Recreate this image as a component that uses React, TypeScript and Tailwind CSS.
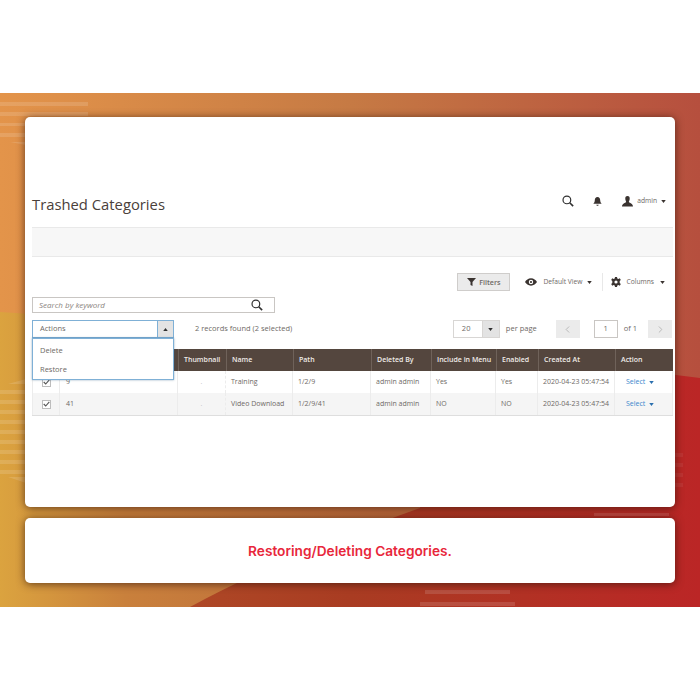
import { ChevronLeft, ChevronRight } from "lucide-react"

const columns = [
  { label: "", width: "w-[28px]" },
  { label: "ID", width: "w-[118px]" },
  { label: "Thumbnail", width: "w-[48px]" },
  { label: "Name", width: "w-[67px]" },
  { label: "Path", width: "w-[78px]" },
  { label: "Deleted By", width: "w-[60px]" },
  { label: "Include in Menu", width: "w-[65px]" },
  { label: "Enabled", width: "w-[42px]" },
  { label: "Created At", width: "w-[77px]" },
  { label: "Action", width: "w-[58px]" },
]

const rows = [
  { id: "9", name: "Training", path: "1/2/9", menu: "Yes", enabled: "Yes", bg: "bg-white" },
  { id: "41", name: "Video Download", path: "1/2/9/41", menu: "NO", enabled: "NO", bg: "bg-[#f5f5f5]" },
]

const lowerStripes = [297, 307, 317, 327, 337, 347, 357, 367, 377]

function Caret({ up = false, className = "" }: { up?: boolean; className?: string }) {
  return (
    <svg width="5" height="3" viewBox="0 0 6 4" className={className}>
      <path d={up ? "M0 4 L3 0 L6 4 Z" : "M0 0 L3 4 L6 0 Z"} fill="currentColor" />
    </svg>
  )
}

function SearchIcon({ size }: { size: number }) {
  return (
    <svg width={size} height={size} viewBox="0 0 14 14" fill="none" stroke="#303030">
      <circle cx="5.7" cy="5.7" r="4.5" strokeWidth="1.4" />
      <path d="M9 9 L13 13" strokeWidth="1.9" />
    </svg>
  )
}

function CheckBox() {
  return (
    <span className="flex h-[9px] w-[9px] items-center justify-center border border-[#bdbdbd] bg-white">
      <svg width="7" height="6" viewBox="0 0 7 6" fill="none">
        <path d="M0.7 3 L2.7 5 L6.3 0.8" stroke="#555" strokeWidth="1.1" />
      </svg>
    </span>
  )
}

function Backdrop() {
  return (
    <svg className="absolute inset-0 h-full w-full" viewBox="0 0 700 514" preserveAspectRatio="none">
      <defs>
        <linearGradient id="warm" x1="0" y1="0" x2="420" y2="0" gradientUnits="userSpaceOnUse">
          <stop offset="0" stopColor="#dba33f" />
          <stop offset="0.3" stopColor="#c9803c" />
          <stop offset="1" stopColor="#b8653a" />
        </linearGradient>
        <linearGradient id="top" x1="0" y1="0" x2="700" y2="0" gradientUnits="userSpaceOnUse">
          <stop offset="0" stopColor="#e3944a" />
          <stop offset="0.5" stopColor="#c67a44" />
          <stop offset="1" stopColor="#b64f3e" />
        </linearGradient>
      </defs>
      <path d="M0 200 L450 200 L420 415 Q280 465 190 514 L0 514 Z" fill="url(#warm)" />
      <path d="M0 0 L700 0 L700 285 Q350 240 0 219 Z" fill="url(#top)" />
      <g fill="#ffffff" opacity="0.13">
        <rect x="0" y="9" width="88" height="4" />
        <rect x="0" y="19" width="88" height="4" />
        <rect x="0" y="30" width="85" height="3" />
        <rect x="0" y="40" width="26" height="4" />
        <path d="M10 49 L26 49 L26 52 Z" />
        {lowerStripes.map((y) => (
          <rect key={y} x="0" y={y} width="26" height="4" />
        ))}
        <path d="M8 291 L26 286 L26 291 Z" />
        <path d="M8 384 L26 384 L26 390 Z" />
        <rect x="594" y="420" width="75" height="3" />
        <rect x="425" y="497" width="85" height="4" />
        <rect x="420" y="509" width="95" height="4" />
      </g>
      <g fill="#ffffff" opacity="0.06">
        <rect x="675" y="360" width="8" height="4" />
        <rect x="675" y="370" width="8" height="4" />
        <rect x="675" y="380" width="8" height="4" />
        <rect x="675" y="390" width="8" height="4" />
      </g>
    </svg>
  )
}

export default function App() {
  return (
    <div className="h-[700px] w-[700px] bg-white pt-[93px] font-['Open_Sans',sans-serif] text-[#6e6965]">
      <div className="relative h-[514px] bg-[linear-gradient(90deg,#b4552a_0%,#a93c22_50%,#bb2626_100%)] px-[25px] pt-[24px]">
        <Backdrop />

        <div className="relative h-[390px] rounded-[5px] bg-white pl-[7px] pr-[2px] shadow-[0_1px_9px_rgba(50,20,10,0.7)]">
          <div className="flex h-[110px] items-end justify-between pb-[11px] pr-[7px]">
            <h1 className="text-[14.8px] leading-[24px] text-[#4a403a]">Trashed Categories</h1>
            <div className="mb-[9px] flex items-center text-[#3a3330]">
              <SearchIcon size={12} />
              <svg width="9" height="11" viewBox="0 0 10 11" className="ml-[19px]">
                <path d="M5 0.5 C7 0.5 8 2 8 4 C8 6 9 7 9.7 8 L0.3 8 C1 7 2 6 2 4 C2 2 3 0.5 5 0.5 Z M3.7 9 L6.3 9 C6.3 10.5 3.7 10.5 3.7 9 Z" fill="currentColor" />
              </svg>
              <svg width="11" height="11" viewBox="0 0 11 11" className="ml-[20px]">
                <path d="M5.5 0 C7.2 0 7.9 1.2 7.7 3 C7.5 4.5 7 5.2 6.8 6 C7.5 7 11 7.5 11 10.5 L0 10.5 C0 7.5 3.5 7 4.2 6 C4 5.2 3.5 4.5 3.3 3 C3.1 1.2 3.8 0 5.5 0 Z" fill="currentColor" />
              </svg>
              <span className="ml-[4px] text-[6.7px] text-[#6e6965]">admin</span>
              <Caret className="ml-[4px]" />
            </div>
          </div>

          <div className="h-[30px] border-y border-[#e9e9e9] bg-[#f7f7f7]" />

          <div className="mt-[16px] flex h-[18px] items-center justify-end pr-[8px]">
            <button className="flex h-[18px] w-[53px] items-center justify-center gap-[3px] border border-[#cfcdcb] bg-[#ebebeb] text-[7.2px] font-semibold text-[#6e6965]">
              <svg width="9" height="8" viewBox="0 0 9 8">
                <path d="M0 0 L9 0 L5.5 4 L5.5 8 L3.5 7 L3.5 4 Z" fill="#3a3330" />
              </svg>
              Filters
            </button>
            <svg width="12" height="8" viewBox="0 0 13 8" className="ml-[15px]">
              <path fillRule="evenodd" d="M6.5 0 C9.5 0 11.8 2 13 4 C11.8 6 9.5 8 6.5 8 C3.5 8 1.2 6 0 4 C1.2 2 3.5 0 6.5 0 Z M6.5 1.6 A2.4 2.4 0 1 0 6.5 6.4 A2.4 2.4 0 1 0 6.5 1.6 Z" fill="#3a3330" />
              <circle cx="6.5" cy="4" r="1.2" fill="#3a3330" />
            </svg>
            <span className="ml-[6px] text-[6.7px]">Default View</span>
            <Caret className="ml-[5px] text-[#3a3330]" />
            <span className="ml-[10px] h-[18px] w-px bg-[#e8e8e8]" />
            <svg width="10" height="10" viewBox="0 0 10 10" className="ml-[8px]">
              <path fillRule="evenodd" d="M4 0 H6 L6.3 1.4 L7.5 2 L8.8 1.3 L9.8 3 L8.7 3.9 V6 L9.8 7 L8.8 8.7 L7.5 8 L6.3 8.6 L6 10 H4 L3.7 8.6 L2.5 8 L1.2 8.7 L0.2 7 L1.3 6 V4 L0.2 3 L1.2 1.3 L2.5 2 L3.7 1.4 Z M5 3.4 A1.6 1.6 0 1 0 5 6.6 A1.6 1.6 0 1 0 5 3.4 Z" fill="#3a3330" />
            </svg>
            <span className="ml-[5px] text-[6.7px]">Columns</span>
            <Caret className="ml-[6px] text-[#3a3330]" />
          </div>

          <div className="mt-[6px] flex h-[16px] w-[243px] items-center justify-between border border-[#c9c6c3] pl-[6px] pr-[11px]">
            <span className="text-[8px] italic text-[#8a8480]">Search by keyword</span>
            <SearchIcon size={12} />
          </div>

          <div className="relative mt-[7px] flex h-[18px] items-center pr-[1px]">
            <div className="flex h-[18px] w-[142px] items-center justify-between border border-[#7fb0d6] pl-[7px] text-[7.5px]">
              Actions
              <span className="flex h-full w-[16px] items-center justify-center border-l border-[#7fb0d6] bg-[#e3e3e3] text-[#303030]">
                <Caret up />
              </span>
            </div>
            <span className="ml-[21px] text-[7.5px]">2 records found (2 selected)</span>
            <div className="ml-auto flex h-[18px] w-[47px] items-center justify-between border border-[#d8d6d4] pl-[8px] text-[7.5px]">
              20
              <span className="flex h-full w-[17px] items-center justify-center border-l border-[#d8d6d4] bg-[#e3e3e3] text-[#303030]">
                <Caret />
              </span>
            </div>
            <span className="ml-[6px] text-[7.5px]">per page</span>
            <span className="ml-[19px] flex h-[18px] w-[24px] items-center justify-center bg-[#ebebeb] text-[#b5b5b5]">
              <ChevronLeft size={11} />
            </span>
            <span className="ml-[14px] flex h-[18px] w-[24px] items-center justify-center border border-[#c9c6c3] text-[7.5px]">1</span>
            <span className="ml-[6px] text-[7.5px]">of 1</span>
            <span className="ml-[11px] flex h-[18px] w-[24px] items-center justify-center bg-[#ebebeb] text-[#b5b5b5]">
              <ChevronRight size={11} />
            </span>

            <div className="absolute left-0 top-[18px] z-10 flex h-[42px] w-[142px] flex-col justify-around border border-[#7fb0d6] bg-white pl-[7px] pt-[2px] text-[7.5px] shadow-[0_0_2px_rgba(40,90,130,0.5)]">
              <span>Delete</span>
              <span>Restore</span>
            </div>
          </div>

          <div className="mt-[11px] w-[641px] border-b border-[#dedede] text-[7px]">
            <div className="flex h-[22px] bg-[#54463e] font-semibold text-[#f0ece9]">
              {columns.map((col) => (
                <div key={col.label || "check"} className={`${col.width} flex items-center border-l border-[#6f625a] pl-[5px] first:border-l-0`}>
                  {col.label}
                </div>
              ))}
            </div>
            {rows.map((row) => (
              <div key={row.id} className={`flex h-[22px] ${row.bg}`}>
                <div className="flex w-[28px] items-center justify-center border-x border-[#ececec]">
                  <CheckBox />
                </div>
                <div className="flex w-[118px] items-center border-r border-[#ececec] pl-[6px]">{row.id}</div>
                <div className="flex w-[48px] items-center justify-center border-r border-dashed border-[#ececec] text-[#c4c4c4]">.</div>
                <div className="flex w-[67px] items-center border-r border-[#ececec] pl-[5px]">{row.name}</div>
                <div className="flex w-[78px] items-center border-r border-[#ececec] pl-[5px]">{row.path}</div>
                <div className="flex w-[60px] items-center border-r border-[#ececec] pl-[5px]">admin admin</div>
                <div className="flex w-[65px] items-center border-r border-[#ececec] pl-[5px]">{row.menu}</div>
                <div className="flex w-[42px] items-center border-r border-[#ececec] pl-[5px]">{row.enabled}</div>
                <div className="flex w-[77px] items-center whitespace-nowrap border-r border-[#ececec] pl-[5px]">2020-04-23 05:47:54</div>
                <div className="flex w-[58px] items-center gap-[4px] border-r border-[#ececec] pl-[11px] text-[#3a86cc]">
                  Select
                  <Caret className="text-[#2a6fae]" />
                </div>
              </div>
            ))}
          </div>
        </div>

        <div className="relative mt-[11px] flex h-[65px] items-center justify-center rounded-[5px] bg-white shadow-[0_1px_9px_rgba(50,20,10,0.7)]">
          <span className="pt-[1px] font-['Inter',sans-serif] text-[13.7px] font-semibold text-[#e8273b]">Restoring/Deleting Categories.</span>
        </div>
      </div>
    </div>
  )
}
